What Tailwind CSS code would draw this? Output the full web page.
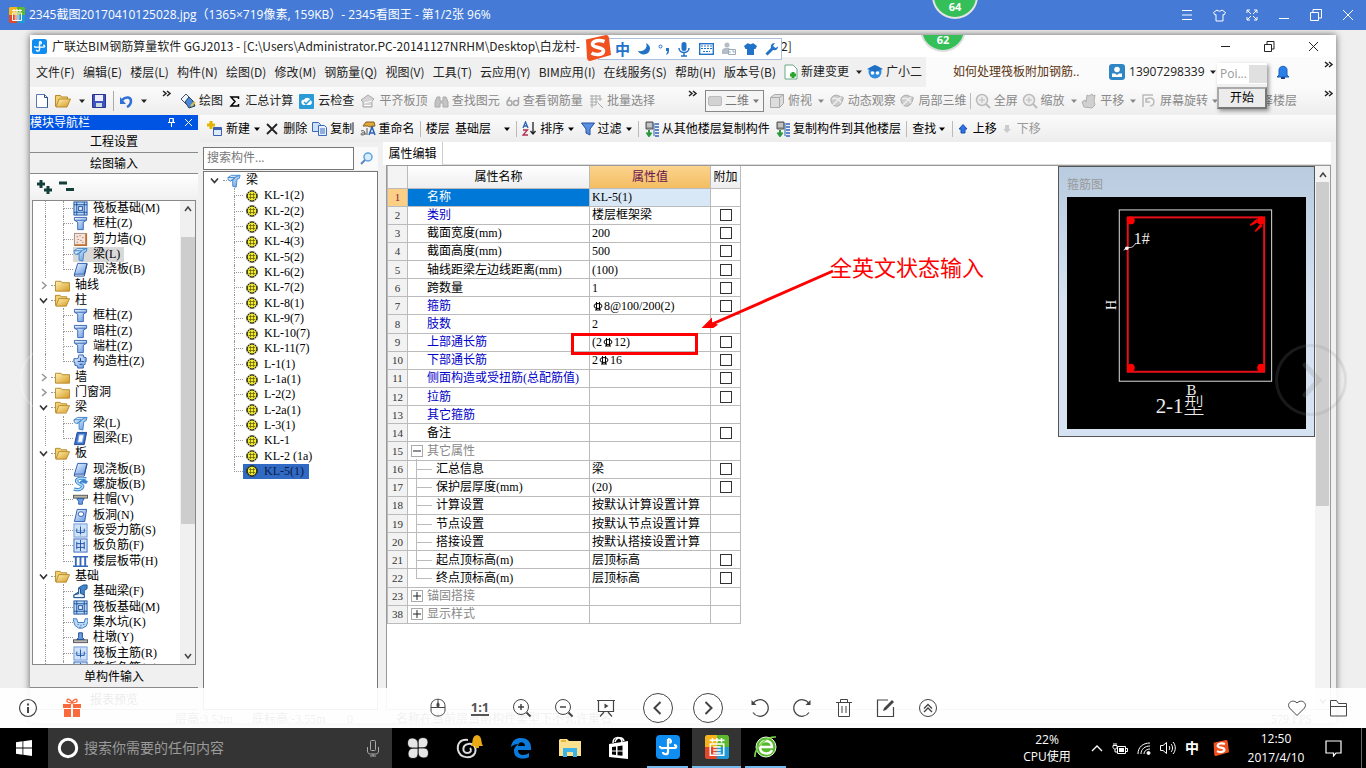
<!DOCTYPE html>
<html lang="zh-CN">
<head>
<meta charset="utf-8">
<title>2345看图王</title>
<script src="https://cdn.jsdelivr.net/npm/@tailwindcss/browser@4"></script>
</head>
<body class="h-screen overflow-hidden flex flex-col bg-[#efefef] text-[12px] leading-[16px] text-black font-['Open_Sans','Noto_Sans_CJK_SC',sans-serif]">

<svg class="absolute size-0" aria-hidden="true">
  <defs>
    <linearGradient id="gb" x1="0" x2="1" y1="0" y2="1"><stop offset="0" stop-color="#f4faff"/><stop offset="1" stop-color="#5f95e0"/></linearGradient>
    <linearGradient id="gy" x1="0" x2="1" y1="0" y2="1"><stop offset="0" stop-color="#fff2b0"/><stop offset="1" stop-color="#d59a26"/></linearGradient>
  </defs>
  <symbol id="raft" viewBox="0 0 16 16"><rect x="1" y="1" width="14" height="14" fill="#b9d7f6" stroke="#1c4f9e"/><path d="M1 4h14M1 12h14M4 1v14M12 1v14" stroke="#1c4f9e"/><rect x="6" y="6" width="4" height="4" fill="#eaf4ff" stroke="#1c4f9e"/></symbol>
  <symbol id="col" viewBox="0 0 16 16"><path d="M1.500 1.500h13v3l-3.500 2v8h-6v-8l-3.500-2z" fill="url(#gb)" stroke="#3464b4"/><path d="M2 4.500h12" stroke="#3464b4"/></symbol>
  <symbol id="wall" viewBox="0 0 16 16"><rect x="1.500" y="1.500" width="13" height="13" fill="#f3e4dc" stroke="#a88878"/><path d="M14 2v12H2" stroke="#c07030" stroke-width="2" fill="none"/><path d="M4 5h1M7 4h1M10 6h1M5 8h1M8 9h1M4 11h1M10 11h1" stroke="#a03c20"/></symbol>
  <symbol id="beam" viewBox="0 0 16 16"><path d="M1 4l4-2.500h10L14 5l-2.500 1-1 9-4-1V7L4 8 1.500 7z" fill="url(#gb)" stroke="#3c86cc"/><path d="M1 4h8l5-2.500M9 4.500L7 7M4 8l5-3.500" stroke="#3c86cc" fill="none"/></symbol>
  <symbol id="slab" viewBox="0 0 16 16"><path d="M5 1.500h10l-3 11.500H1.500z" fill="url(#gb)" stroke="#2a5ab0"/><path d="M1.500 13v2H12l.5-2L15 2" fill="none" stroke="#1d458e"/></symbol>
  <symbol id="ring" viewBox="0 0 16 16"><path d="M4.500 1.500h10l-2.500 13H1.500z" fill="#3a6ec8" stroke="#1d458e"/><path d="M6.500 4h5l-1.500 8H5z" fill="#fff" stroke="#7aa6e6"/></symbol>
  <symbol id="wheel" viewBox="0 0 16 16"><path d="M6 1h5v2l3 1v4h-1v3l-2 1v3H5v-2l-3-1V9H1V5h3l2-1z" fill="url(#gb)" stroke="#2a5ab0"/><path d="M8 4v4H5M9 8h3M7 11h3" stroke="#1d458e" fill="none"/></symbol>
  <symbol id="fold" viewBox="0 0 16 16"><path d="M.5 3.500h6l1 1.500h8v9H.5z" fill="url(#gy)" stroke="#b88a2c"/></symbol>
  <symbol id="foldo" viewBox="0 0 16 16"><path d="M.5 13.500v-11h5l1 1.500h6v2" fill="#f0cf6c" stroke="#b88a2c"/><path d="M1 14l3-8h11.500l-3.500 8z" fill="url(#gy)" stroke="#b88a2c"/></symbol>
  <symbol id="spiral" viewBox="0 0 16 16"><path d="M14 2C8 0 3 2 4 5s8 3 6 6-5 3-9 2M15 6c-3-2-6-1-6 0" fill="none" stroke="#3a86d0" stroke-width="3.500"/><path d="M14 2C8 0 3 2 4 5s8 3 6 6-5 3-9 2" fill="none" stroke="#b9e0fa" stroke-width="1.500"/></symbol>
  <symbol id="cap" viewBox="0 0 16 16"><rect x=".5" y="3.500" width="15" height="3" fill="#b9b9a8" stroke="#555"/><path d="M4 7h8l-2 3v3H6v-3z" fill="#6ea0e6" stroke="#2a5ab0"/></symbol>
  <symbol id="hole" viewBox="0 0 16 16"><path d="M4.500 1.500h10l-2 13H1.500z" fill="url(#gb)" stroke="#2a5ab0"/><ellipse cx="8.500" cy="6.500" rx="3" ry="2.500" fill="#fff" stroke="#2a5ab0"/></symbol>
  <symbol id="rs" viewBox="0 0 16 16"><rect x="1" y="1" width="14" height="14" fill="#cfe2fb" stroke="#6b95d6"/><path d="M1 8h14M8 1v14" stroke="#9dbce8"/><path d="M4 6v4h8V6M8 4v8" stroke="#1d50a8" fill="none"/></symbol>
  <symbol id="rf" viewBox="0 0 16 16"><rect x="1" y="1" width="14" height="14" fill="#cfe2fb" stroke="#3868ba"/><path d="M4 4v8M12 4v8M4 6h8M4 10h8M8 2v12" stroke="#1d50a8" fill="none"/></symbol>
  <symbol id="strip" viewBox="0 0 16 16"><path d="M0 3h16M0 13h16" stroke="#3868ba" stroke-width="1.500"/><path d="M3 3v10M8 3v10M13 3v10" stroke="#3868ba" stroke-width="2"/></symbol>
  <symbol id="fb" viewBox="0 0 16 16"><path d="M1 14.500v-3l5-3V4l5-3h4v4l-3 2v7.500z" fill="#3f86cc" stroke="#1d4f86"/><path d="M1 14.500v-3l5-1V5h2v5l4 1.500v3z" fill="#e6f2ff" stroke="#1d4f86"/></symbol>
  <symbol id="pit" viewBox="0 0 16 16"><path d="M0 4h4l1 4h7l1-4h3v3l-2 5-4 2H6l-4-3z" fill="#bcd9f5" stroke="#3a7ac0"/><path d="M5 10h1M8 11h1M11 10h1M7 13h1" stroke="#1d458e"/></symbol>
  <symbol id="pier" viewBox="0 0 16 16"><rect x=".5" y="10.500" width="15" height="3" fill="#b8b8b8" stroke="#555"/><path d="M4 10l2-2V3h4v5l2 2z" fill="#6ea0e6" stroke="#1d458e"/></symbol>
  <symbol id="gear" viewBox="0 0 12 12"><path d="M6 0v12M0 6h12M2 2l8 8M10 2l-8 8M4 .5l4 11M8 .5l-4 11M.5 4l11 4M.5 8l11-4" stroke="#2e2c08" stroke-width="1.400"/><circle cx="6" cy="6" r="4.200" fill="#f4ee2a"/><path d="M4.500 3v6M7.500 3v6M3 4.500h6M3 7.500h6" stroke="#6a6610" stroke-width=".8"/></symbol>
  <symbol id="dd" viewBox="0 0 8 8"><path d="M1 2.500h6L4 6z" fill="currentColor"/></symbol>
  <symbol id="chev2" viewBox="0 0 10 8"><path d="M1 1l3 2.500L1 6M5 1l3 2.500L5 6" fill="none" stroke="#222" stroke-width="1.500"/></symbol>
  <symbol id="hand" viewBox="0 0 16 16"><path d="M3 14l-2-5 3-2 1 2 1-7 2 1 3-2 1 2 2-1-1 6 1 4-3 3z" fill="#d0d0d0" stroke="#b0b0b0"/></symbol>
  <symbol id="bar3" viewBox="0 0 16 16"><path d="M1 7l7-5 6 4-2 2v6H3V9z" fill="#d4d4d4" stroke="#aaa"/><path d="M4 10l8-2M4 12.500h7" stroke="#fff"/></symbol>
  <symbol id="cube" viewBox="0 0 16 16"><path d="M1.500 4.500l4-3h9v9l-4 4h-9zM1.500 4.500h9v10M10.500 4.500l4-3" fill="#ddd" stroke="#aaa"/></symbol>
  <symbol id="orb" viewBox="0 0 16 16"><path d="M2 8c-1-5 5-7 8-5s5 0 4 3-2 6-5 7-6-1-7-5z" fill="#ccc" stroke="#aaa"/><path d="M4 12l8-8M3 6c3-2 8 0 9 4" stroke="#eee" stroke-width="1.500" fill="none"/></symbol>
  <symbol id="lens" viewBox="0 0 16 16"><circle cx="7" cy="7" r="5.500" fill="#eee" stroke="#bbb" stroke-width="1.500"/><path d="M11 11l4 4" stroke="#bbb" stroke-width="2"/><path d="M7 4v6M4 7h6" stroke="#bbb"/></symbol>
  <symbol id="copyf" viewBox="0 0 16 16"><path d="M2 1h7v7H2z" fill="#999" stroke="#555"/><path d="M3 3h5M3 5h5" stroke="#eee"/><path d="M11 3h4M11 6h4M11 9h4M11 12h4M11 15h4" stroke="#2e66b8" stroke-width="1.500"/><path d="M10 2v13" stroke="#2e66b8"/><path d="M5 9v5M2.500 11.500L5 15l2.500-3.500" stroke="#2a9a3c" stroke-width="2" fill="none"/></symbol>
  <symbol id="k2345" viewBox="0 0 16 16"><path d="M1 0h7v8H0V1z" fill="#f5b41c"/><path d="M8 0h7l1 1v7H8z" fill="#5cb82c"/><path d="M0 8h8v8H1l-1-1z" fill="#e2492c"/><path d="M8 8h8v7l-1 1H8z" fill="#1f9ad6"/><path d="M3 3.500h10M5 2v3M8 2v3M11 2v3M3.500 6h9v7.500h-9zM5.500 8h5M5.500 10h5M5.500 12h5" stroke="#fff" fill="none"/></symbol>
  <symbol id="glodon" viewBox="0 0 24 24"><rect width="24" height="24" rx="4" fill="#0f8df0"/><path d="M12 4v13c0 3-5 3-5 0M12 4c3 0 4 3 1.500 4M4 11c0 3 3 2 4 2h10c3 0 3-3 0-3" fill="none" stroke="#fff" stroke-width="2.200"/></symbol>
  <symbol id="sogou" viewBox="0 0 26 26"><path d="M1 4.500L21 0c2 0 2.500 1 3 3l2 17-21 6c-2 0-2.500-1-3-3z" fill="#f0511e"/><path d="M19.500 6.500C14 4.500 8 5.500 7.500 9c-.5 4.500 11.500 2.500 11 7-.5 4-8 4.500-12 2" fill="none" stroke="#fff" stroke-width="3.600"/></symbol>
</svg>

<!-- viewer title bar -->
<header class="h-[30px] shrink-0 bg-[#457bd6] text-white flex items-center pl-[9px] pr-[12px]">
  <svg class="size-4"><use href="#k2345"/></svg>
  <h1 class="ml-[4px] whitespace-nowrap">2345截图20170410125028.jpg（1365×719像素, 159KB）- 2345看图王 - 第1/2张 96%</h1>
  <div class="ml-auto flex gap-[20px]">
    <button aria-label="菜单" class="size-[12px]"><svg viewBox="0 0 12 12" fill="none" stroke="#fff"><path d="M1 1.500h10M1 6h10M1 10.500h10"/></svg></button>
    <button aria-label="皮肤" class="size-[13px]"><svg viewBox="0 0 13 13" fill="none" stroke="#fff"><path d="M4 1c1 1.500 4 1.500 5 0l3.500 2.500L11 6l-1-.5V12H3V5.500L2 6 .5 3.500z"/></svg></button>
    <button aria-label="全屏" class="size-[12px]"><svg viewBox="0 0 12 12" fill="none" stroke="#fff"><path d="M1 4V1h3M8 1h3v3M11 8v3H8M4 11H1V8M1 1l4 4M11 1L7 5M11 11L7 7M1 11l4-4"/></svg></button>
    <button aria-label="最小化" class="size-[12px]"><svg viewBox="0 0 12 12" stroke="#fff"><path d="M1 9.500h10"/></svg></button>
    <button aria-label="还原" class="size-[12px]"><svg viewBox="0 0 12 12" fill="none" stroke="#fff"><path d="M.5 3.500h8v8h-8zM3 3V.5h8.500V9H9"/></svg></button>
    <button aria-label="关闭" class="size-[12px]"><svg viewBox="0 0 12 12" stroke="#fff"><path d="M1 1l10 10M11 1L1 11"/></svg></button>
  </div>
</header>

<main class="relative flex-1 min-h-0 flex flex-col px-[30px] pt-[5px] pb-[5px] overflow-hidden">
  <div class="relative flex-1 min-h-0 flex flex-col bg-[#f0f0f0] shadow-[0_0_7px_rgba(0,0,0,0.6)]">

    <!-- application title -->
    <div class="h-[22px] shrink-0 bg-white flex items-center pl-[2px] pr-[17px] text-[#222] whitespace-nowrap font-['Noto_Sans_CJK_SC',sans-serif]">
      <svg class="size-[15px]"><use href="#glodon"/></svg>
      <span class="ml-[5px] w-[729px]">广联达BIM钢筋算量软件 GGJ2013 - [C:\Users\Administrator.PC-20141127NRHM\Desktop\白龙村-</span><span>2]</span>
      <svg class="ml-auto w-[98px] h-[11px]" viewBox="0 0 98 11" fill="none" stroke="#222"><path d="M0 5.500h9M43.500 3.500h7v7h-7zM46 3V.5h7V8h-2M88 1l9 9M97 1l-9 9"/></svg>
    </div>

    <!-- menus -->
    <nav class="h-[30px] shrink-0 flex items-center text-[#222] whitespace-nowrap">
      <div class="w-[740px] ml-[6px] flex justify-between font-['Noto_Sans_CJK_SC',sans-serif]">
        <button>文件(F)</button><button>编辑(E)</button><button>楼层(L)</button><button>构件(N)</button><button>绘图(D)</button><button>修改(M)</button><button>钢筋量(Q)</button><button>视图(V)</button><button>工具(T)</button><button>云应用(Y)</button><button>BIM应用(I)</button><button>在线服务(S)</button><button>帮助(H)</button><button>版本号(B)</button>
      </div>
      <button class="ml-[8px] flex items-center gap-[3px]"><svg class="w-[14px] h-[16px]" viewBox="0 0 14 16"><path d="M1 1h8l4 4v10H1z" fill="#fff" stroke="#6a8"/><path d="M6 11h6M9 8v6" stroke="#2aa52a" stroke-width="3"/></svg>新建变更<svg class="size-2 ml-[3px]"><use href="#dd"/></svg></button>
      <button class="ml-[4px] flex items-center gap-[3px]"><svg class="size-4" viewBox="0 0 16 16"><circle cx="8" cy="8" r="6.500" fill="#2f8be0"/><path d="M0 5l8-4 8 4-8 3z" fill="#1f6fc4"/><circle cx="5.500" cy="9" r="1.800" fill="#fff"/><circle cx="10.500" cy="9" r="1.800" fill="#fff"/></svg>广小二</button>
      <div class="ml-[4px] flex-1 min-w-0 self-stretch flex items-center bg-[#fbfbfb] text-[#5a3310]">
        <a href="#tip" class="ml-[27px] w-[134px]">如何处理筏板附加钢筋..</a>
        <button class="ml-[22px] flex items-center gap-[4px] text-[#222]"><svg class="size-4" viewBox="0 0 16 16"><rect width="16" height="16" rx="3" fill="#2e86c4"/><circle cx="8" cy="5.500" r="2.800" fill="#fff"/><path d="M3 13V9.500h3l2 1.500 2-1.500h3V13z" fill="#fff"/></svg>13907298339<svg class="size-2"><use href="#dd"/></svg></button>
        <button aria-label="通知" class="ml-auto mr-[34px]"><svg class="size-[14px]" viewBox="0 0 14 14"><path d="M3 10V5c0-5 8-5 8 0v5l2 2H1z" fill="#2b7fe8" stroke="#1b5fb8"/><path d="M5 13h4" stroke="#1b3f88" stroke-width="2"/></svg></button>
        <svg class="w-[10px] h-2 mr-[2px] mb-[14px]"><use href="#chev2"/></svg>
      </div>
    </nav>

    <!-- main toolbar -->
    <div class="h-[28px] shrink-0 flex items-center whitespace-nowrap bg-linear-to-b from-[#fbfbfb] to-[#ededed] text-[#222]">
      <div class="ml-[5px] w-[137px] flex items-center justify-between">
        <button aria-label="新建"><svg class="size-[14px]" viewBox="0 0 14 14"><path d="M1.500.5h8l3 3v10h-11z" fill="#fff" stroke="#5a7ab0"/><path d="M9.500.5v3h3v10" fill="none" stroke="#2d4f8e"/></svg></button>
        <button aria-label="打开"><svg class="size-4"><use href="#foldo"/></svg></button><svg class="size-2"><use href="#dd"/></svg>
        <button aria-label="保存"><svg class="size-[14px]" viewBox="0 0 14 14"><path d="M.5.5h13v13H.5z" fill="#3e52c4" stroke="#2a348c"/><path d="M3 1h8v6H3z" fill="#eef"/><path d="M4 9h6v4H4z" fill="#cdd"/></svg></button>
        <span class="w-px h-[20px] bg-[#aaa]"></span>
        <button aria-label="撤销"><svg class="size-[13px]" viewBox="0 0 13 13"><path d="M2 5c4-4 9-3 9 1s-2 5-4 6" fill="none" stroke="#2f6fd8" stroke-width="2.500"/><path d="M0 2v7h6z" fill="#2f6fd8"/></svg></button><svg class="size-2"><use href="#dd"/></svg>
        <svg class="w-[10px] h-2 ml-[8px] mb-[14px]"><use href="#chev2"/></svg>
      </div>
      <div class="ml-[8px] w-[475px] flex items-center justify-between text-[#888]">
        <button class="flex items-center gap-[3px] text-[#222]"><svg class="size-4" viewBox="0 0 16 16"><path d="M1 6l5-5 5 5-5 5z" fill="#eef4ff" stroke="#456"/><path d="M5 9l4-5 4 4 2 5-6 2z" fill="#4a86d8" stroke="#245"/><path d="M11 13l4-4" stroke="#e0c040" stroke-width="2"/></svg>绘图</button>
        <button class="flex items-center gap-[5px] text-[#222]"><svg class="size-[11px]" viewBox="0 0 11 11" fill="none" stroke="#000" stroke-width="1.500"><path d="M9.500 3V1H2l4 4.500L2 10h7.500V8"/></svg>汇总计算</button>
        <button class="flex items-center gap-[4px] text-[#222]"><svg class="size-[15px]" viewBox="0 0 15 15"><rect width="15" height="15" rx="1" fill="#2a9bd6"/><path d="M3 10c-2-3 1-5 2-4 1-3 6-3 6 0 3 1 2 5 0 5H4z" fill="#fff"/><path d="M5 8l2 2 4-4" stroke="#2a9bd6" fill="none" stroke-width="1.500"/></svg>云检查</button>
        <button class="flex items-center gap-[3px]"><svg class="size-4"><use href="#bar3"/></svg>平齐板顶</button>
        <button class="flex items-center gap-[3px]"><svg class="size-[15px]" viewBox="0 0 15 15"><path d="M1 13V8l2-5h3v4h3V3h3l2 5v5H9V9H6v4z" fill="#c4c4c4" stroke="#aaa"/></svg>查找图元</button>
        <button class="flex items-center gap-[3px]"><svg class="size-[14px]" viewBox="0 0 14 14" fill="none" stroke="#aaa" stroke-width="1.500"><circle cx="3.500" cy="9" r="2.500"/><circle cx="10" cy="9" r="2.500"/><path d="M1 8l3-5M12.500 8V3"/></svg>查看钢筋量</button>
        <button class="flex items-center gap-[3px]"><svg class="size-[15px]" viewBox="0 0 15 15" fill="none" stroke="#aaa"><path d="M1 2h10M1 5h12M1 8h8M1 11h6M3 1v13M7 1v10M11 1v6M9 9l5 5"/></svg>批量选择</button>
      </div>
      <svg class="w-[10px] h-2 ml-[33px] mb-[14px]"><use href="#chev2"/></svg>
      <label class="ml-[7px] w-[59px] h-[22px] border border-[#888] bg-[#f5f5f5] flex items-center pl-[2px] text-[#777]">
        <span class="w-[14px] h-[10px] rounded-xs bg-[#d2d2d2] border border-[#bbb]"></span>
        <select aria-label="视图模式" class="appearance-none w-[28px] pl-[3px] outline-none"><option>二维</option></select>
        <svg class="size-2 ml-auto mr-[3px]"><use href="#dd"/></svg>
      </label>
      <div class="ml-[5px] w-[450px] flex items-center justify-between text-[#888]">
        <button class="flex items-center gap-[3px]"><svg class="size-4"><use href="#cube"/></svg>俯视<svg class="size-2 ml-[2px]"><use href="#dd"/></svg></button>
        <button class="flex items-center gap-[3px]"><svg class="size-4"><use href="#orb"/></svg>动态观察</button>
        <button class="flex items-center gap-[3px]"><svg class="size-4"><use href="#orb"/></svg>局部三维</button>
        <span class="w-px h-[16px] bg-[#bbb]"></span>
        <button class="flex items-center gap-[3px]"><svg class="size-4"><use href="#lens"/></svg>全屏</button>
        <button class="flex items-center gap-[3px]"><svg class="size-4"><use href="#lens"/></svg>缩放<svg class="size-2 ml-[2px]"><use href="#dd"/></svg></button>
        <button class="flex items-center gap-[3px]"><svg class="size-4"><use href="#hand"/></svg>平移<svg class="size-2 ml-[2px]"><use href="#dd"/></svg></button>
        <button class="flex items-center gap-[3px]"><svg class="size-4" viewBox="0 0 16 16" fill="none" stroke="#bbb" stroke-width="1.500"><path d="M2 14V2h10M5 8a4 4 0 1 1 4 5M5 5v4h4"/></svg>屏幕旋转<svg class="size-2"><use href="#dd"/></svg></button>
      </div>
      <button class="ml-auto mr-[27px] text-[#888]">选择楼层</button>
      <svg class="w-[10px] h-2 mr-[2px] mb-[14px]"><use href="#chev2"/></svg>
    </div>

    <div class="flex-1 min-h-0 flex">
      <!-- module navigation -->
      <aside class="w-[168px] shrink-0 flex flex-col">
        <div class="h-[15px] shrink-0 bg-[#0054e3] text-white flex items-center pr-[5px]">
          <h2 class="flex-1">模块导航栏</h2>
          <svg class="w-[25px] h-[9px]" viewBox="0 0 25 9" fill="none" stroke="#fff"><path d="M1.500.5h4v4h-4zM0 4.500h7M3.500 5v4M5 1v3M17 1l7 7M24 1l-7 7"/></svg>
        </div>
        <button class="h-[23px] shrink-0 pt-[2px] border-b border-[#8a8a8a]">工程设置</button>
        <button class="h-[21px] shrink-0 pt-[2px] border-b border-[#8a8a8a]">绘图输入</button>
        <div class="h-[26px] shrink-0 bg-linear-to-b from-white to-[#f0f0f0] flex items-center pl-[7px]">
          <svg class="w-[38px] h-[16px]" viewBox="0 0 38 16" fill="none" stroke="#134038" stroke-width="3"><path d="M0 5h8M4 1v8M7 11h8M11 7v8M22 4h8M29 10.500h8"/></svg>
        </div>
        <div class="flex-1 min-h-0 overflow-hidden ml-[2px] mr-[2px] flex items-start bg-white border border-[#888]">
          <div id="nav" class="h-[475px] flex-1 min-w-0 grid auto-rows-fr font-['Liberation_Serif','Noto_Sans_CJK_SC',serif]"></div>
          <div class="w-[15px] self-stretch bg-[#f0f0f0] flex flex-col items-center py-[5px]">
            <svg class="w-[8px] h-[6px]" viewBox="0 0 8 6" fill="none" stroke="#444" stroke-width="1.500"><path d="M1 5l3-4 3 4"/></svg>
            <div class="mt-[25px] w-[14px] h-[287px] bg-[#cdcdcd]"></div>
            <svg class="mt-auto w-[8px] h-[6px]" viewBox="0 0 8 6" fill="none" stroke="#444" stroke-width="1.500"><path d="M1 1l3 4 3-4"/></svg>
          </div>
        </div>
        <button class="h-[23px] shrink-0 pt-[2px] border-b border-[#8a8a8a]">单构件输入</button>
        <button class="h-[22px] shrink-0 pt-[2px] border-b border-[#8a8a8a]">报表预览</button>
      </aside>

      <div class="flex-1 min-w-0 flex flex-col ml-[2px]">
        <!-- component toolbar -->
        <div class="h-[27px] shrink-0 bg-linear-to-b from-[#fbfbfb] to-[#ededed] flex items-center whitespace-nowrap">
          <div class="ml-[7px] w-[834px] flex items-center justify-between">
            <button class="flex items-center gap-[3px]"><svg class="size-4" viewBox="0 0 16 16"><path d="M4 0v8M0 4h8" stroke="#e2b400" stroke-width="3"/><path d="M6.500 6.500h8v8h-8z" fill="#dfeafc" stroke="#3a62b0"/><path d="M7 8h7" stroke="#3a62b0" stroke-width="2"/></svg>新建<svg class="size-2"><use href="#dd"/></svg></button>
            <button class="flex items-center gap-[5px]"><svg class="size-[12px]" viewBox="0 0 12 12" stroke="#222" stroke-width="1.800"><path d="M1 1l10 10M11 1L1 11"/></svg>删除</button>
            <button class="flex items-center gap-[3px]"><svg class="size-[15px]" viewBox="0 0 15 15" stroke="#3a6ab8"><path d="M.5 1.500h6l2 2v7h-8z" fill="#cfe0fa"/><path d="M6.500 4.500h6l2 2v8h-8z" fill="#e6f0ff"/><path d="M8 8h5M8 10h5M8 12h5"/></svg>复制</button>
            <button class="flex items-center gap-[3px]"><svg class="size-4" viewBox="0 0 16 16"><path d="M3 5l3-4h8l1 4-5 1-2-1z" fill="#e0a93c" stroke="#8a5a1c"/><path d="M9 14l3-8 3 8M10 12h4" fill="none" stroke="#2a62b8" stroke-width="1.500"/><path d="M1 10c3-1 4 0 4 4M5 12c-4-1-5 2-3 2s3-1 3-2M7 7v7" fill="none" stroke="#555"/></svg>重命名</button>
            <span class="w-px h-[16px] bg-[#bbb]"></span>
            <label for="floor">楼层</label>
            <span class="flex items-center w-[56px]"><select id="floor" class="appearance-none flex-1 outline-none"><option>基础层</option></select><svg class="size-2"><use href="#dd"/></svg></span>
            <span class="w-px h-[16px] bg-[#bbb]"></span>
            <button class="flex items-center gap-[3px]"><svg class="size-[15px]" viewBox="0 0 15 15" fill="none" stroke-width="1.300"><path d="M1 7l2.500-6L6 7M2 5h3" stroke="#2a62b8"/><path d="M1 9h4.500L1 14h5" stroke="#b03050"/><path d="M11 1v12M8.500 10l2.500 3 2.500-3" stroke="#222"/></svg>排序<svg class="size-2"><use href="#dd"/></svg></button>
            <button class="flex items-center gap-[3px]"><svg class="size-[14px]" viewBox="0 0 14 14"><path d="M.5 1h13L9 7v6l-4-2V7z" fill="#5b8fe0" stroke="#2450a0"/></svg>过滤<svg class="size-2"><use href="#dd"/></svg></button>
            <span class="w-px h-[16px] bg-[#bbb]"></span>
            <button class="flex items-center gap-[2px]"><svg class="size-4"><use href="#copyf"/></svg>从其他楼层复制构件</button>
            <button class="flex items-center gap-[2px]"><svg class="size-4"><use href="#copyf"/></svg>复制构件到其他楼层</button>
            <span class="w-px h-[16px] bg-[#bbb]"></span>
            <button class="flex items-center gap-[2px]">查找<svg class="size-2"><use href="#dd"/></svg></button>
            <span class="w-px h-[16px] bg-[#bbb]"></span>
            <button class="flex items-center gap-[5px]"><svg class="size-[10px]" viewBox="0 0 10 10"><path d="M5 .5L9 5H7v4H3V5H1z" fill="#2f74e6" stroke="#1c4cae"/></svg>上移</button>
            <button class="flex items-center gap-[5px] text-[#999]"><svg class="size-[10px]" viewBox="0 0 10 10"><path d="M5 9L9 5H7V1H3v4H1z" fill="#ccc"/></svg>下移</button>
          </div>
        </div>

        <div class="flex-1 min-h-0 flex">
          <!-- component list -->
          <section class="w-[176px] shrink-0 ml-[3px] flex flex-col pt-[5px] pr-px">
            <div class="h-[23px] shrink-0 flex">
              <input type="text" aria-label="搜索构件" placeholder="搜索构件..." class="w-[151px] h-[23px] border border-[#777] bg-white px-[3px] pb-[3px] text-[12px] placeholder:text-[#777] outline-none">
              <button aria-label="搜索" class="flex-1 bg-[#fafafa] flex items-center justify-center"><svg class="size-[13px]" viewBox="0 0 13 13"><circle cx="8" cy="5" r="4" fill="#d8edfc" stroke="#5ba3e0" stroke-width="1.500"/><path d="M5 8l-4 4" stroke="#5b83c0" stroke-width="2"/></svg></button>
            </div>
            <div class="flex-1 min-h-0 mt-px bg-white border border-[#777] pt-px">
              <div id="parts" class="h-[306px] grid auto-rows-fr font-['Liberation_Serif','Noto_Sans_CJK_SC',serif]"></div>
            </div>
          </section>

          <!-- property editor -->
          <section class="flex-1 min-w-0 ml-[4px] mr-[5px] flex flex-col">
            <div class="h-[23px] shrink-0 bg-white flex border-b border-[#ddd]">
              <button class="w-[60px] h-[23px] bg-white border-r border-[#ccc] text-center">属性编辑</button>
            </div>
            <div class="flex-1 min-h-0 ml-[3px] flex items-start bg-white border border-[#999]">
              <table class="w-[353px] h-[458px] border-collapse table-fixed text-left font-['Liberation_Serif','Noto_Sans_CJK_SC',serif]">
                <colgroup><col class="w-[20px]"><col class="w-[182px]"><col class="w-[121px]"><col class="w-[30px]"></colgroup>
                <thead><tr class="h-[22px] text-center">
                  <th scope="col" aria-label="序号" class="p-0 bg-[#f4f4f4] border border-t-0 border-[#bbb]"></th>
                  <th scope="col" class="p-0 font-normal bg-linear-to-b from-white to-[#eee] border border-t-0 border-[#bbb]">属性名称</th>
                  <th scope="col" class="p-0 font-normal bg-linear-to-b from-[#fbd38c] to-[#f3bd62] border border-t-0 border-[#bbb] text-[#6a1450]">属性值</th>
                  <th scope="col" class="p-0 font-normal bg-linear-to-b from-white to-[#eee] border border-t-0 border-[#bbb]">附加</th>
                </tr></thead>
                <tbody id="props"></tbody>
              </table>

              <!-- stirrup preview -->
              <figure class="ml-auto w-[257px] h-[271px] shrink-0 border border-[#555] bg-linear-to-b from-[#b9cbdf] via-[#d5e3f2] to-[#d5e3f2] px-[8px] flex flex-col">
                <figcaption class="pt-[10px] h-[30px] text-[#999]">箍筋图</figcaption>
                <svg class="w-full h-[232px] bg-black" viewBox="0 0 240 232" fill="none">
                  <rect x="52.500" y="12.500" width="153" height="172" stroke="#ddd"/>
                  <rect x="61" y="20" width="137" height="155" stroke="#e81018" stroke-width="2"/>
                  <g fill="#f00"><circle cx="64" cy="23" r="4"/><circle cx="195" cy="23" r="4"/><circle cx="64" cy="171" r="4"/><circle cx="195" cy="171" r="4"/></g>
                  <path d="M196 22l-12 6M197 24l-8 10M184 28l7-6M189 34l7-6" stroke="#f00" stroke-width="1.500"/>
                  <path d="M57 53l4-3c4 1 6-1 8-4" stroke="#eee"/><circle cx="60" cy="51" r="1.800" fill="#fff"/>
                  <g fill="#eee" font-family="Liberation Serif, Noto Sans CJK SC, serif">
                    <text x="67" y="47" font-size="16">1#</text>
                    <text x="0" y="0" font-size="14" transform="translate(49 113) rotate(-90)">H</text>
                    <text x="120" y="198" font-size="15">B</text>
                    <text x="89" y="216" font-size="21" font-weight="300">2-1型</text>
                  </g>
                </svg>
              </figure>
              <div class="w-[15px] self-stretch bg-[#f3f3f3] flex flex-col items-center pt-[6px] pb-[5px]">
                <svg class="w-[8px] h-[6px]" viewBox="0 0 8 6" fill="none" stroke="#444" stroke-width="1.500"><path d="M1 5l3-4 3 4"/></svg>
                <div class="mt-[4px] w-[13px] h-[324px] bg-[#cdcdcd]"></div>
                <svg class="mt-auto w-[8px] h-[6px]" viewBox="0 0 8 6" fill="none" stroke="#444" stroke-width="1.500"><path d="M1 1l3 4 3-4"/></svg>
              </div>
            </div>
          </section>
        </div>
      </div>
    </div>

    <!-- status bar -->
    <footer class="h-[13px] leading-[18px] shrink-0 flex overflow-hidden text-[#444] font-['Liberation_Serif','Noto_Sans_CJK_SC',serif]">
      <span class="ml-[145px] w-[77px]">层高:3.52m</span><span class="w-[95px]">底标高:-3.55m</span><span class="w-[49px]">0</span><span>名称在当前层当前构件类型下不允许重名</span><span class="ml-auto mr-[24px]">579 FPS</span>
    </footer>

    <!-- floating speed bubble inside the captured window -->
    <div class="absolute left-[890px] top-0 w-[46px] h-[18px] overflow-hidden"><div class="absolute -top-[29px] size-[46px] rounded-full bg-[#35bf58] border-2 border-[#ddd] flex items-end justify-center pb-[3px] text-white text-[11px] leading-[15px] font-bold">62</div></div>
  </div>

  <!-- input method bar -->
  <div class="absolute left-[598px] top-[8px] w-[184px] h-[22px] bg-white border border-[#a9bfda] flex items-center pl-[16px] pr-[3px] justify-between text-[#2273c8]">
    <span class="font-bold text-[15px] leading-[18px]">中</span>
    <svg class="size-[12px]" viewBox="0 0 12 12"><path d="M8 0c2 5-2 9-8 8 2 5 12 5 12-3 0-2-2-4-4-5z" fill="#2273c8"/></svg>
    <svg class="size-[12px]" viewBox="0 0 12 12"><circle cx="2.500" cy="3.500" r="1.500" fill="none" stroke="#2273c8"/><path d="M8 5h3v3c0 2-1 3-3 4l1.500-4H8z" fill="#2273c8"/></svg>
    <svg class="w-[12px] h-[15px]" viewBox="0 0 12 15"><rect x="3.500" width="5" height="9" rx="2.500" fill="#2273c8"/><path d="M1 6c0 6 10 6 10 0M6 11v3M3 14h6" fill="none" stroke="#2273c8" stroke-width="1.500"/></svg>
    <svg class="w-[15px] h-[12px]" viewBox="0 0 15 12"><rect x=".7" y=".7" width="13.600" height="10.600" fill="#fff" stroke="#2273c8" stroke-width="1.400"/><path d="M2 3h11M2 5.500h11M4 8.500h7" stroke="#2273c8" stroke-dasharray="2 1"/></svg>
    <svg class="size-[14px]" viewBox="0 0 14 14"><circle cx="5" cy="3" r="2.500" fill="#b4bcc8"/><path d="M0 12V8c2-3 8-3 9 0v4z" fill="#b4bcc8"/><path d="M6.500 7.500h7v5h-7zM8 9v2M10 9h2v2" fill="#fff" stroke="#9ab"/></svg>
    <svg class="w-[13px] h-[12px]" viewBox="0 0 13 12"><path d="M4 0c1 1.500 4 1.500 5 0l4 3-1.500 3H10v6H3V6H1.500L0 3z" fill="#2273c8"/></svg>
    <svg class="size-[13px]" viewBox="0 0 13 13"><path d="M1.500 11.500l6-6" stroke="#2273c8" stroke-width="3"/><path d="M10 0C6 0 5 3 6.500 6.500 10 8 13 7 13 3.500L10.500 5 8 3z" fill="#2273c8"/></svg>
  </div>
  <svg class="absolute left-[585px] top-[5px] size-[26px]"><use href="#sogou"/></svg>

  <!-- floating point dialog -->
  <div class="absolute left-[1217px] top-[33px] w-[50px] h-[46px] bg-[#f0f0f0] shadow-[2px_2px_4px_rgba(0,0,0,0.4)] flex flex-col justify-between">
    <div class="h-[21px] bg-white flex items-center justify-between pl-[3px] text-[#999]">Poi...<span class="w-[18px] h-[18px] bg-[#e0e0e0]"></span></div>
    <button class="h-[22px] border-2 border-[#777] border-t-[#aaa] border-l-[#aaa] bg-[#ececec] flex items-center justify-center text-black">开始</button>
  </div>

  <!-- annotation drawn on the picture -->
  <div class="absolute left-[571px] top-[303px] w-[127px] h-[22px] border-3 border-[#f00]"></div>
  <svg class="absolute left-[700px] top-[238px] w-[136px] h-[64px]" viewBox="0 0 136 64"><path d="M133 3L10 57" stroke="#f00" stroke-width="3"/><path d="M4 59l7-7 0 3 5 2-3 2z" fill="#f00" stroke="#f00" stroke-width="2"/></svg>
  <p class="absolute left-[830px] top-[225px] whitespace-nowrap text-[22px] leading-[24px] text-[#f00]">全英文状态输入</p>

  <!-- page turning hints -->
  <svg class="absolute right-[18px] top-[313px] size-[74px]" viewBox="0 0 74 74" fill="none"><circle cx="37" cy="37" r="34.500" stroke="#888" stroke-opacity=".18" stroke-width="3"/><path d="M31 22l14 15-14 15" stroke="#888" stroke-opacity=".22" stroke-width="5" stroke-linecap="round"/></svg>
  <svg class="absolute left-[18px] top-[313px] size-[74px]" viewBox="0 0 74 74" fill="none"><circle cx="37" cy="37" r="34.500" stroke="#fff" stroke-opacity=".2" stroke-width="2"/></svg>

  <!-- viewer tools -->
  <div class="absolute inset-x-0 bottom-0 h-[40px] bg-white/92 flex items-center justify-between text-[#444]">
    <div class="w-[120px] flex items-center pl-[18px] gap-[24px]">
      <button aria-label="信息"><svg class="size-[20px]" viewBox="0 0 20 20" fill="none" stroke="#444"><circle cx="10" cy="10" r="8.500" stroke-width="1.200"/><path d="M10 9v6M10 5.500v2" stroke-width="2"/></svg></button>
      <button aria-label="礼物"><svg class="size-[20px]" viewBox="0 0 20 20"><path d="M1 6h8v4H1zM11 6h8v4h-8zM2 11h7v8H2zM11 11h7v8h-7z" fill="#fb6a3c"/><path d="M10 5C7 5 4 4 5 2s4 0 5 3c1-3 4-5 5-3s-2 3-5 3z" fill="none" stroke="#fb6a3c" stroke-width="1.300"/></svg></button>
    </div>
    <div class="flex items-center">
      <button aria-label="鼠标" class="w-[42px] flex justify-center"><svg class="size-[20px]" viewBox="0 0 20 20" fill="none" stroke="#444"><path d="M3 8c0-9 14-9 14 0v4c0 8-14 8-14 0zM3 9.500h14M10 1.500v4"/><rect x="9" y="5" width="2" height="4" rx="1" fill="#444"/></svg></button>
      <button class="w-[42px] flex justify-center"><span class="border-b-2 border-[#555] font-bold text-[13px] leading-[14px] font-['Noto_Sans',sans-serif] text-[#555]">1:1</span></button>
      <button aria-label="放大" class="w-[42px] flex justify-center"><svg class="size-[20px]" viewBox="0 0 20 20" fill="none" stroke="#444"><circle cx="9" cy="9" r="7.500"/><path d="M6 9h6M9 6v6" stroke-width="1.500"/><path d="M14.500 14.500l4 4" stroke-width="2"/></svg></button>
      <button aria-label="缩小" class="w-[42px] flex justify-center"><svg class="size-[20px]" viewBox="0 0 20 20" fill="none" stroke="#444"><circle cx="9" cy="9" r="7.500"/><path d="M6 9h6" stroke-width="1.500"/><path d="M14.500 14.500l4 4" stroke-width="2"/></svg></button>
      <button aria-label="幻灯片" class="w-[42px] flex justify-center"><svg class="size-[20px]" viewBox="0 0 20 20" fill="none" stroke="#444" stroke-width="1.200"><path d="M1 2.500h18M2.500 2.500v11h15v-11M8 14l-4 4.500M12 14l4 4.500"/><path d="M8.500 5.500v5l4-2.500z" fill="#444" stroke="none"/></svg></button>
      <div class="flex px-[6px]">
        <button aria-label="上一张" class="w-[50px] flex justify-center"><svg class="size-[32px]" viewBox="0 0 32 32" fill="none" stroke="#444"><circle cx="16" cy="16" r="14.500"/><path d="M18.500 10l-6 6 6 6" stroke-width="2"/></svg></button>
        <button aria-label="下一张" class="w-[50px] flex justify-center"><svg class="size-[32px]" viewBox="0 0 32 32" fill="none" stroke="#444"><circle cx="16" cy="16" r="14.500"/><path d="M13.500 10l6 6-6 6" stroke-width="2"/></svg></button>
      </div>
      <button aria-label="左旋" class="w-[42px] flex justify-center"><svg class="size-[20px]" viewBox="0 0 20 20" fill="none" stroke="#444" stroke-width="1.200"><path d="M3 5.500a8.300 8.300 0 1 1 0 9"/><path d="M1.500 2v5h5z" fill="#444" stroke="none"/></svg></button>
      <button aria-label="右旋" class="w-[42px] flex justify-center"><svg class="size-[20px]" viewBox="0 0 20 20" fill="none" stroke="#444" stroke-width="1.200"><path d="M17 5.500a8.300 8.300 0 1 0 0 9"/><path d="M18.500 2v5h-5z" fill="#444" stroke="none"/></svg></button>
      <button aria-label="删除" class="w-[42px] flex justify-center"><svg class="size-[20px]" viewBox="0 0 20 20" fill="none" stroke="#444"><path d="M2 4.500h16M6.500 4V1.500h7V4M4.500 5v13.500h11V5M8 8v7M12 8v7"/></svg></button>
      <button aria-label="编辑" class="w-[42px] flex justify-center"><svg class="size-[20px]" viewBox="0 0 20 20" fill="none" stroke="#444" stroke-width="1.200"><path d="M12 2H1.500v16.500h16V9"/><path d="M7 13l1-3 8-8 2 2-8 8z" fill="#444" stroke="none"/></svg></button>
      <button aria-label="更多" class="w-[42px] flex justify-center"><svg class="size-[20px]" viewBox="0 0 20 20" fill="none" stroke="#444"><circle cx="10" cy="10" r="8.500"/><path d="M6 10.500l4-4 4 4M6 14l4-4 4 4" stroke-width="1.400"/></svg></button>
    </div>
    <div class="w-[120px] flex items-center justify-end pr-[19px] gap-[23px]">
      <button aria-label="收藏"><svg class="size-[20px]" viewBox="0 0 20 20" fill="none" stroke="#444"><path d="M10 17.500L2.500 10C-1 5 6 .5 10 5c4-4.500 11 0 7.500 5z"/></svg></button>
      <button aria-label="文件夹"><svg class="w-[17px] h-[17px]" viewBox="0 0 17 17" fill="none" stroke="#444"><path d="M.5 16V.5h6l2 3h8V16zM.5 6.500h16"/></svg></button>
    </div>
  </div>
</main>

<!-- Windows taskbar -->
<div class="h-[40px] shrink-0 bg-black text-white flex items-center">
  <button aria-label="开始" class="w-[48px] flex justify-center"><svg class="size-4" viewBox="0 0 16 16" fill="#fff"><path d="M0 2.300L6.500 1.300v6.200H0zM7.300 1.200L16 0v7.500H7.300zM0 8.400h6.500v6.300L0 13.700zM7.300 8.400H16V16l-8.700-1.200z"/></svg></button>
  <div class="w-[344px] h-[40px] bg-[#343434] flex items-center pl-[9px] pr-[12px]">
    <svg class="size-[22px]" viewBox="0 0 22 22" fill="none" stroke="#fff" stroke-width="3"><circle cx="11" cy="11" r="8.700"/></svg>
    <input type="text" aria-label="搜索" placeholder="搜索你需要的任何内容" class="ml-[5px] flex-1 min-w-0 bg-transparent text-[14px] placeholder:text-[#9a9a9a] outline-none">
    <svg class="w-[14px] h-[18px]" viewBox="0 0 14 18" fill="none" stroke="#aaa"><rect x="4.500" y="1.500" width="5" height="10" rx="1"/><path d="M1.500 8v4c0 2 1 3 3 3h5c2 0 3-1 3-3V8M7 15v2M4 17h6"/></svg>
  </div>
  <button aria-label="应用" class="w-[52px] flex justify-center"><svg class="size-[22px]" viewBox="0 0 22 22"><g fill="#e6e6e6" stroke="#000" stroke-width=".8"><path d="M11 11V5c0-3 2-4.500 5-4.500s5 1.500 5 4.500-2 6-5 6z"/><path d="M11 11h6c3 0 4.500 2 4.500 5s-1.500 5-4.500 5-6-2-6-5z"/><path d="M11 11v6c0 3-2 4.500-5 4.500S1 20 1 17s2-6 5-6z"/><path d="M11 11H5C2 11 .5 9 .5 6S2 1 5 1s6 2 6 5z"/></g></svg></button>
  <button aria-label="提醒" class="w-[52px] flex justify-center"><svg class="size-[28px]" viewBox="0 0 28 28" fill="none"><path d="M12 6C4 5 1 10 2 16c2 9 14 9 17 3 2-6-2-10-7-9-6 1-6 9-1 9 4 0 5-3 3-5" stroke="#ddd" stroke-width="2"/><path d="M16 10c1-6 1-8 5-9 4 1 4 3 5 9l1 2H15z" fill="#e9ab14"/><path d="M19 13h4" stroke="#e9ab14" stroke-width="2"/></svg></button>
  <button aria-label="Edge" class="w-[49px] flex justify-center"><svg class="size-[22px]" viewBox="0 0 22 22"><path d="M1 10C2 3 6 1 11 1c7 0 10 5 10 9v3H8c0 6 7 6 11 3v4c-6 3-15 2-15-6 0-4 3-6 5-7-4 0-6 1-8 3zM8 9h7c0-5-7-5-7 0z" fill="#0a7bdc"/></svg></button>
  <button aria-label="文件资源管理器" class="w-[49px] flex justify-center"><svg class="w-[22px] h-[20px]" viewBox="0 0 22 20"><path d="M0 2l1-1h7l2 2h12v15H0z" fill="#fbe08e"/><path d="M2 2h5v2H2z" fill="#e6b53c"/><path d="M4 19v-9h14v9h-4v-5H8v5z" fill="#3cb2ea"/></svg></button>
  <button aria-label="应用商店" class="w-[49px] flex justify-center"><svg class="size-[24px]" viewBox="0 0 24 24"><path d="M2 8l19-3v18L2 21z" fill="#fff"/><path d="M6 7c0-7 8-7 9-1M8 6c2-6 8-5 9-1" fill="none" stroke="#fff" stroke-width="1.500"/><path d="M5 11l4-.5v4H5zM10.500 10.300l5-.8v5h-5zM5 15.500h4v3.500l-4-.5zM10.500 15.500h5v4.300l-5-.6z" fill="#000"/></svg></button>
  <button aria-label="广联达" class="w-[49px] h-[40px] flex justify-center items-center"><span class="w-[41px] h-[40px] flex justify-center items-center border-b-2 border-[#76b9ed]"><svg class="size-[24px]"><use href="#glodon"/></svg></span></button>
  <button aria-label="2345看图王" class="w-[49px] h-[40px] flex justify-center items-center bg-[#333] border-b-2 border-[#76b9ed]"><svg class="size-[24px]"><use href="#k2345"/></svg></button>
  <button aria-label="浏览器" class="w-[49px] h-[40px] flex justify-center items-center"><span class="w-[41px] h-[40px] flex justify-center items-center border-b-2 border-[#76b9ed]"><svg class="size-[24px]" viewBox="0 0 24 24"><circle cx="12" cy="12" r="10" fill="#55b82c" stroke="#e8f6e0"/><path d="M18 15c-2 5-12 5-12-3s12-8 12 0H7" fill="none" stroke="#fff" stroke-width="2.400"/><path d="M1 22C0 14 12 1 22 2" fill="none" stroke="#7fd04e" stroke-width="1.600"/></svg></span></button>

  <div class="ml-auto w-[56px] mr-[16px] text-center leading-[17px]"><p>22%</p><p class="whitespace-nowrap">CPU使用</p></div>
  <div class="flex items-center gap-[9px]">
    <svg class="w-[12px] h-[8px]" viewBox="0 0 12 8" fill="none" stroke="#fff" stroke-width="1.300"><path d="M1 7l5-5 5 5"/></svg>
    <svg class="w-[16px] h-[13px]" viewBox="0 0 16 13" fill="none" stroke="#fff"><path d="M5.500 4.500h8v7h-8zM14 6.500h1.500v3H14M1 3.500h4v2c0 2-4 2-4 0zM2 1v2M4 1v2M3 7v3h2"/><path d="M7 6h5v4H7z" fill="#fff" stroke="none"/></svg>
    <svg class="size-[14px]" viewBox="0 0 14 14" fill="none" stroke="#fff"><path d="M1 13C1 6 6 2 13 2M4 13c0-5 4-8 9-8M7 13c0-3 3-5 6-5" /><circle cx="11.500" cy="12" r="1.500" fill="#fff"/></svg>
    <svg class="w-[16px] h-[14px]" viewBox="0 0 16 14" fill="none" stroke="#fff"><path d="M.5 4.500H3l3.500-3v11L3 9.500H.5zM9 5c1 1 1 3 0 4M11 3c2 2 2 6 0 8M13 1c3 3 3 9 0 12"/></svg>
    <span class="text-[14px] font-bold">中</span>
  </div>
  <svg class="ml-[14px] size-[16px]"><use href="#sogou"/></svg>
  <div class="ml-[14px] w-[66px] text-center leading-[19px]"><p>12:50</p><p>2017/4/10</p></div>
  <button aria-label="操作中心" class="ml-[16px]"><svg class="w-[17px] h-[17px]" viewBox="0 0 17 17" fill="none" stroke="#fff" stroke-width="1.200"><path d="M1 1h15v12h-5l-2.500 3V13H1z"/></svg></button>
  <span class="ml-[19px] mr-[4px] w-px h-[40px] bg-[#666]"></span>
</div>

<!-- desktop speed bubble -->
<div class="absolute left-[932px] -top-[27px] size-[46px] rounded-full bg-[#35bf58] border-2 border-[#e4e4e4] flex items-end justify-center pb-[3px] text-white text-[11px] leading-[15px] font-bold">64</div>

<script>
const NAV = [
  ['raft','筏板基础(M)'],['col','框柱(Z)'],['wall','剪力墙(Q)'],['beam','梁(L)','sel'],['slab','现浇板(B)','last'],
  ['fold','轴线'],['foldo','柱'],
  ['col','框柱(Z)'],['col','暗柱(Z)'],['col','端柱(Z)'],['wheel','构造柱(Z)','last'],
  ['fold','墙'],['fold','门窗洞'],['foldo','梁'],['beam','梁(L)'],['ring','圈梁(E)','last'],
  ['foldo','板'],['slab','现浇板(B)'],['spiral','螺旋板(B)'],['cap','柱帽(V)'],['hole','板洞(N)'],['rs','板受力筋(S)'],['rf','板负筋(F)'],['strip','楼层板带(H)','last'],
  ['foldo','基础'],['fb','基础梁(F)'],['raft','筏板基础(M)'],['pit','集水坑(K)'],['pier','柱墩(Y)'],['rs','筏板主筋(R)'],['rf','筏板负筋(X)']
];
const chevron = open => `<svg class="size-[9px]" viewBox="0 0 9 9" fill="none" stroke="${open ? '#333' : '#999'}" stroke-width="1.600"><path d="${open ? 'M1 2.500l3.500 4 3.500-4' : 'M3 1l4 3.500L3 8'}"/></svg>`;
document.getElementById('nav').innerHTML = NAV.map(([icon, text, flag]) => {
  if (icon.startsWith('fold')) {
    return `<div class="min-h-0 flex items-center pl-[6px] whitespace-nowrap">${chevron(icon === 'foldo')}<span class="w-[4px] ml-[3px] border-t border-dotted border-[#999]"></span><svg class="size-[15px]"><use href="#${icon}"/></svg><span class="ml-[5px] leading-[15px]">${text}</span></div>`;
  }
  const foot = flag === 'last' ? '<span class="flex-1"></span>' : '<span class="flex-1 border-l border-dotted border-[#999]"></span>';
  return `<div class="min-h-0 flex items-center pl-[12px] whitespace-nowrap"><span class="w-[18px] h-full border-l border-dotted border-[#999]"></span><span class="w-[10px] h-full flex flex-col"><span class="flex-1 border-l border-b border-dotted border-[#999]"></span>${foot}</span><span class="${flag === 'sel' ? 'flex items-center h-full pr-[4px] bg-[#d9d9d9]' : 'flex items-center h-full pr-[4px]'}"><svg class="size-[15px]"><use href="#${icon}"/></svg><span class="ml-[5px] leading-[15px]">${text}</span></span></div>`;
}).join('');

const PARTS = ['KL-1(2)','KL-2(2)','KL-3(2)','KL-4(3)','KL-5(2)','KL-6(2)','KL-7(2)','KL-8(1)','KL-9(7)','KL-10(7)','KL-11(7)','L-1(1)','L-1a(1)','L-2(2)','L-2a(1)','L-3(1)','KL-1','KL-2 (1a)','KL-5(1)'];
document.getElementById('parts').innerHTML =
  `<div class="min-h-0 flex items-center pl-[6px]">${chevron(true)}<span class="w-[4px] ml-[4px] border-t border-dotted border-[#999]"></span><svg class="size-[14px]"><use href="#beam"/></svg><span class="ml-[5px] leading-[15px]">梁</span></div>` +
  PARTS.map((text, i) => {
    const last = i === PARTS.length - 1;
    return `<div class="min-h-0 flex items-center pl-[30px]"><span class="w-[9px] h-full flex flex-col"><span class="flex-1 border-l border-b border-dotted border-[#999]"></span><span class="${last ? 'flex-1' : 'flex-1 border-l border-dotted border-[#999]'}"></span></span><span class="${last ? 'w-[66px] h-full flex items-center pl-[3px] bg-[#316ac5] text-[#0a1a44]' : 'w-[66px] h-full flex items-center pl-[3px]'}"><svg class="size-[12px] shrink-0"><use href="#gear"/></svg><span class="ml-[6px] leading-[15px] whitespace-nowrap">${text}</span></span></div>`;
  }).join('');

const BAR = '<svg class="inline-block size-[10px] align-[-1px] mx-px" viewBox="0 0 10 10" fill="none" stroke="#000"><ellipse cx="5" cy="5" rx="4" ry="2.500"/><path d="M3.500 1v8M6.500 1v8M2 9h6"/></svg>';
// number, name, value, checkbox, style
const PROPS = [
  [1,'名称','KL-5(1)',0,'head'],[2,'类别','楼层框架梁',1,'blue'],[3,'截面宽度(mm)','200',1],[4,'截面高度(mm)','500',1],[5,'轴线距梁左边线距离(mm)','(100)',1],[6,'跨数量','1',1],
  [7,'箍筋',BAR + '8@100/200(2)',1,'blue'],[8,'肢数','2',0,'blue'],[9,'上部通长筋','(2' + BAR + '12)',1,'blue'],[10,'下部通长筋','2' + BAR + '16',1,'blue'],
  [11,'侧面构造或受扭筋(总配筋值)','',1,'blue'],[12,'拉筋','',1,'blue'],[13,'其它箍筋','',0,'blue'],[14,'备注','',1],[15,'其它属性','',0,'minus'],
  [16,'汇总信息','梁',1,'sub'],[17,'保护层厚度(mm)','(20)',1,'sub'],[18,'计算设置','按默认计算设置计算',0,'sub'],[19,'节点设置','按默认节点设置计算',0,'sub'],[20,'搭接设置','按默认搭接设置计算',0,'sub'],
  [21,'起点顶标高(m)','层顶标高',1,'sub'],[22,'终点顶标高(m)','层顶标高',1,'sublast'],[23,'锚固搭接','',0,'plus'],[38,'显示样式','',0,'plus']
];
const box = plus => `<button aria-label="${plus ? '展开' : '收起'}" class="ml-[3px] mr-[4px] size-[12px] border border-[#aaa] bg-white flex items-center justify-center"><svg class="size-[8px]" viewBox="0 0 8 8" stroke="#222"><path d="${plus ? 'M0 4h8M4 0v8' : 'M0 4h8'}"/></svg></button>`;
function nameCell(name, kind) {
  if (kind === 'minus' || kind === 'plus') return `<div class="h-[16px] flex items-center text-[#888]">${box(kind === 'plus')}<span>${name}</span></div>`;
  if (kind === 'sub' || kind === 'sublast') return `<div class="h-[16px] flex items-center pl-[8px]"><svg class="w-[16px] h-[16px] overflow-visible" viewBox="0 0 16 16" stroke="#bbb"><path d="${kind === 'sub' ? 'M.5-2v20M1 8.500h15' : 'M.5-2v11M1 8.500h15'}"/></svg><span class="ml-[4px]">${name}</span></div>`;
  return `<div class="h-[16px] pl-[19px]">${name}</div>`;
}
document.getElementById('props').innerHTML = PROPS.map(([n, name, value, tick, kind]) => {
  const head = kind === 'head';
  return `<tr class="whitespace-nowrap">
    <th scope="row" class="${head ? 'p-0 font-normal text-center text-[11px] font-[\'Liberation_Sans\',sans-serif] border border-[#bbb] bg-[#fbcf85] text-[#8a2040]' : 'p-0 font-normal text-center text-[11px] font-[\'Liberation_Sans\',sans-serif] border border-[#bbb] bg-[#f2f2f2] text-[#333]'}">${n}</th>
    <td class="${head ? 'p-0 border border-[#bbb] bg-[#0078d7] text-white' : kind === 'blue' ? 'p-0 border border-[#bbb] text-[#0000c8]' : 'p-0 border border-[#bbb]'}">${nameCell(name, kind)}</td>
    <td class="${head ? 'p-0 pl-[2px] border border-[#bbb] bg-[#d9e8f6]' : 'p-0 pl-[2px] border border-[#bbb]'}"><div class="h-[16px]">${value}</div></td>
    <td class="p-0 border border-[#bbb]">${tick ? `<input type="checkbox" aria-label="附加 ${name}" class="appearance-none block mx-auto size-[12px] border border-[#333] bg-white">` : ''}</td></tr>`;
}).join('');
</script>
</body>
</html>
